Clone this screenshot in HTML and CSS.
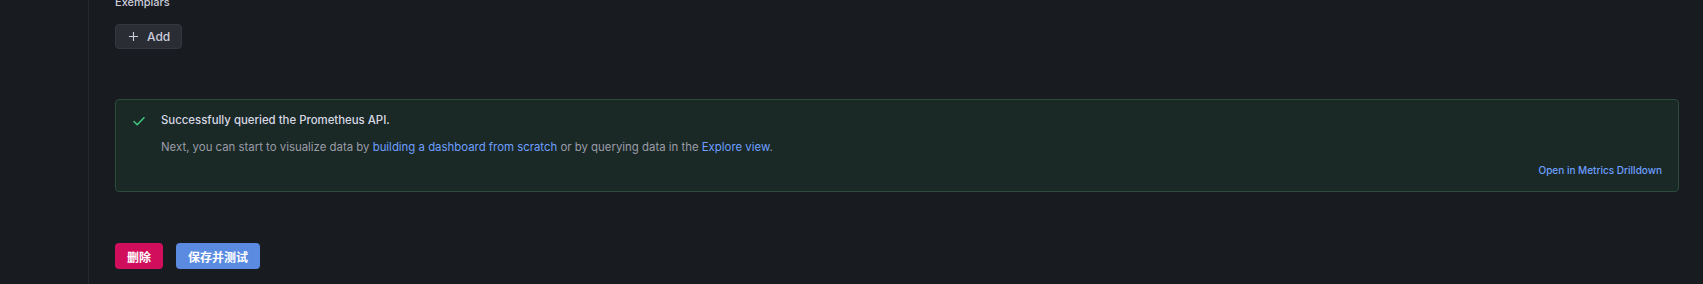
FILE: index.html
```html
<!DOCTYPE html>
<html lang="zh">
<head>
    <meta charset="UTF-8">
    <meta name="viewport" content="width=device-width, initial-scale=1.0">
    <title>Data source settings</title>
    <link rel="stylesheet" href="styles.css">
</head>
<body>
    <div class="layout">
        <div class="sidebar"></div>
        <div class="content">
            <div class="section-title">Exemplars</div>
            <button class="btn-secondary">
                <svg width="11" height="11" viewBox="0 0 12 12"><path d="M6 1v10M1 6h10" stroke="currentColor" stroke-width="1.2"/></svg>
                Add
            </button>

            <div class="alert-success">
                <svg class="alert-icon" width="14" height="14" viewBox="0 0 14 14"><path d="M2 7.5l3.2 3.2L12 3.8" fill="none" stroke="#3fc57c" stroke-width="1.6" stroke-linecap="round" stroke-linejoin="round"/></svg>
                <div class="alert-body">
                    <div class="alert-title">Successfully queried the Prometheus API.</div>
                    <div class="alert-text">Next, you can start to visualize data by <a href="#">building a dashboard from scratch</a> or by querying data in the <a href="#">Explore view</a>.</div>
                    <div class="alert-footer"><a href="#">Open in Metrics Drilldown</a></div>
                </div>
            </div>

            <div class="actions">
                <button class="btn-danger">删除</button>
                <button class="btn-primary">保存并测试</button>
            </div>
        </div>
    </div>
</body>
</html>
```
FILE: styles.css
```css
body {
    margin: 0;
    background-color: #181b1f;
    color: #ccccdc;
    font-family: Inter, "Noto Sans", "Noto Sans CJK SC", sans-serif;
    font-size: 12px;
}
.layout {
    display: flex;
    height: 284px;
    overflow: hidden;
}
.sidebar {
    width: 88px;
    flex-shrink: 0;
    border-right: 1px solid #25282d;
}
.content {
    flex: 1;
    padding: 0 24px 0 26px;
}
.section-title {
    margin-top: -6px;
    height: 16px;
    line-height: 16px;
    font-size: 11px;
    font-weight: 500;
    color: #ccccdc;
}
.btn-secondary {
    margin-top: 14px;
    display: flex;
    align-items: center;
    gap: 8px;
    height: 25px;
    padding: 0 11px 0 12px;
    background: #2a2d33;
    border: 1px solid #34373d;
    border-radius: 4px;
    color: #ccccdc;
    font-family: inherit;
    font-size: 12px;
    font-weight: 500;
    cursor: pointer;
}
.alert-success {
    margin-top: 50px;
    display: flex;
    gap: 15px;
    height: 93px;
    box-sizing: border-box;
    padding: 12px 16px 0 16px;
    background: #1a2926;
    border: 1px solid #2b4b3b;
    border-radius: 4px;
}
.alert-icon {
    margin-top: 2px;
    flex-shrink: 0;
}
.alert-body {
    flex: 1;
}
.alert-title {
    font-weight: 500;
    font-size: 11.4px;
    color: #d8d8e4;
    line-height: 16px;
}
.alert-text {
    margin-top: 11px;
    font-size: 11.4px;
    color: #9b9ca8;
    line-height: 16px;
}
.alert-text a, .alert-footer a {
    color: #6e9fff;
    text-decoration: none;
}
.alert-footer {
    margin-top: 9px;
    text-align: right;
    font-size: 10px;
    font-weight: 500;
}
.actions {
    margin-top: 51px;
    display: flex;
    gap: 13px;
}
.actions button {
    height: 26px;
    padding: 0 12px;
    border: none;
    border-radius: 4px;
    color: #fff;
    font-family: inherit;
    font-size: 12px;
    font-weight: 600;
    cursor: pointer;
}
.btn-danger {
    background: #d10e5c;
}
.btn-primary {
    background: #5a8be0;
}
```
